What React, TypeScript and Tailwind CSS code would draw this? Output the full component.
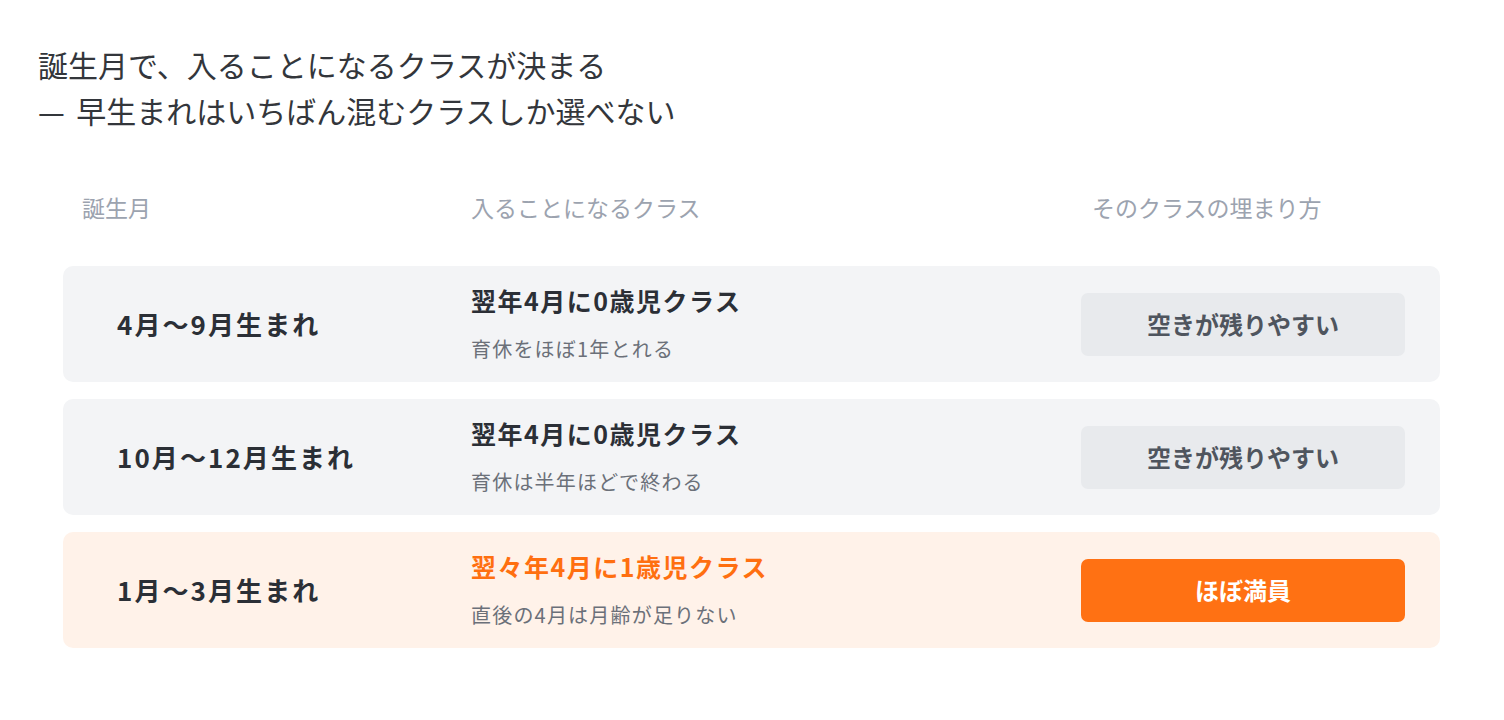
const rows = [
  {
    month: "4月〜9月生まれ",
    klass: "翌年4月に0歳児クラス",
    note: "育休をほぼ1年とれる",
    status: "空きが残りやすい",
    hot: false,
  },
  {
    month: "10月〜12月生まれ",
    klass: "翌年4月に0歳児クラス",
    note: "育休は半年ほどで終わる",
    status: "空きが残りやすい",
    hot: false,
  },
  {
    month: "1月〜3月生まれ",
    klass: "翌々年4月に1歳児クラス",
    note: "直後の4月は月齢が足りない",
    status: "ほぼ満員",
    hot: true,
  },
];

export default function App() {
  return (
    <div className="min-h-[720px] bg-white pt-[41px] font-['Noto_Sans_CJK_JP','Noto_Sans',sans-serif]">
      <h1 className="pl-[38px] text-[30px] leading-[46px] font-normal text-[#33363b]">
        誕生月で、入ることになるクラスが決まる
        <br />
        <span className="inline-block w-[1.05em]">—</span> 早生まれはいちばん混むクラスしか選べない
      </h1>

      <div className="mx-[63px] mt-[58px] w-[1377px]">
        <div className="grid grid-cols-[408px_1fr_324px] pr-[35px] text-[23px] leading-[32px] text-[#9ca3af]">
          <div className="pl-[19px]">誕生月</div>
          <div>入ることになるクラス</div>
          <div className="pl-[11px]">そのクラスの埋まり方</div>
        </div>

        <div className="mt-[43px] flex flex-col gap-[17px]">
          {rows.map((row) => (
            <div
              key={row.month}
              className={
                "grid h-[116px] grid-cols-[408px_1fr_324px] items-center rounded-[10px] pr-[35px] " +
                (row.hot ? "bg-[#fff2e9]" : "bg-[#f3f4f6]")
              }
            >
              <div className="pl-[54px] text-[26px] leading-[32px] font-bold tracking-[0.08em] text-[#2b2f36]">
                {row.month}
              </div>
              <div className="flex flex-col">
                <div
                  className={
                    "text-[25px] leading-[32px] font-bold tracking-[0.06em] " +
                    (row.hot ? "text-[#ff6f10]" : "text-[#2b2f36]")
                  }
                >
                  {row.klass}
                </div>
                <div className="mt-[18px] text-[20px] leading-[30px] tracking-[0.06em] text-[#6b7079]">
                  {row.note}
                </div>
              </div>
              <div
                className={
                  "flex h-[63px] items-center justify-center rounded-[7px] text-[24px] font-bold " +
                  (row.hot
                    ? "bg-[#ff7113] text-white"
                    : "bg-[#e8eaed] text-[#4f555e]")
                }
              >
                {row.status}
              </div>
            </div>
          ))}
        </div>
      </div>
    </div>
  );
}
